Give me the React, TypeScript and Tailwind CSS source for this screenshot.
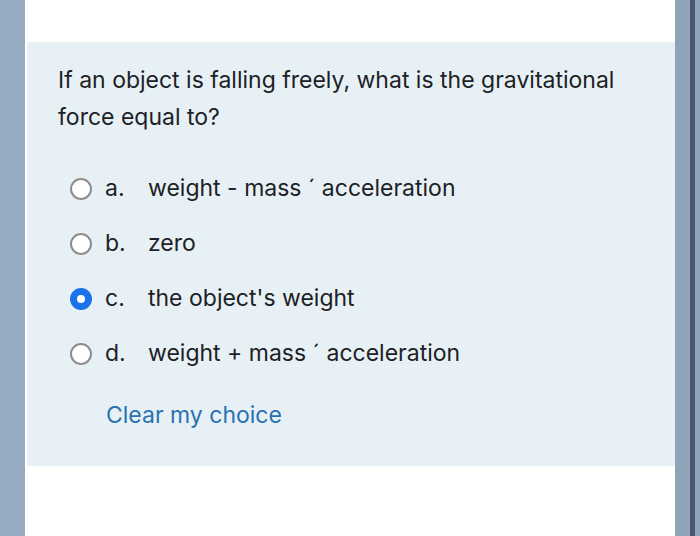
export default function App() {
  const options = [
    { letter: "a.", text: "weight - mass ´ acceleration", checked: false },
    { letter: "b.", text: "zero", checked: false },
    { letter: "c.", text: "the object's weight", checked: true },
    { letter: "d.", text: "weight + mass ´ acceleration", checked: false },
  ];

  return (
    <div
      className="flex h-[536px] w-[700px] overflow-hidden bg-white"
      style={{ fontFamily: "Inter, 'Liberation Sans', sans-serif" }}
    >
      <div className="w-[25px] shrink-0 bg-[#97abc2]" />
      <div className="flex flex-1 flex-col bg-white pl-[2px] pt-[42px]">
        <div className="h-[424px] bg-[#e7f1f5] pl-[31px] pt-[20px]">
          <p className="text-[23px] leading-[37px] text-[#1d2125]">
            If an object is falling freely, what is the gravitational
            <br />
            force equal to?
          </p>
          <div className="ml-[12px] mt-[25px] flex flex-col">
            {options.map((o) => (
              <div key={o.letter} className="flex h-[55px] items-center">
                {o.checked ? (
                  <span className="flex h-[22px] w-[22px] items-center justify-center rounded-full bg-[#1a73e8]">
                    <span className="h-[8px] w-[8px] rounded-full bg-white" />
                  </span>
                ) : (
                  <span className="h-[22px] w-[22px] rounded-full border-2 border-[#8d8d8d] bg-white" />
                )}
                <span className="ml-[13px] w-[43px] text-[23px] text-[#1d2125]">
                  {o.letter}
                </span>
                <span className="text-[23px] text-[#1d2125]">{o.text}</span>
              </div>
            ))}
          </div>
          <div className="ml-[48px] mt-[20px] text-[23px] leading-[28px] text-[#2a71b1]">
            Clear my choice
          </div>
        </div>
      </div>
      <div className="flex w-[25px] shrink-0">
        <div className="w-[15px] bg-[#8ea4b9]" />
        <div className="w-[5px] bg-[#4a5570]" />
        <div className="w-[5px] bg-[#8ea4b9]" />
      </div>
    </div>
  );
}
